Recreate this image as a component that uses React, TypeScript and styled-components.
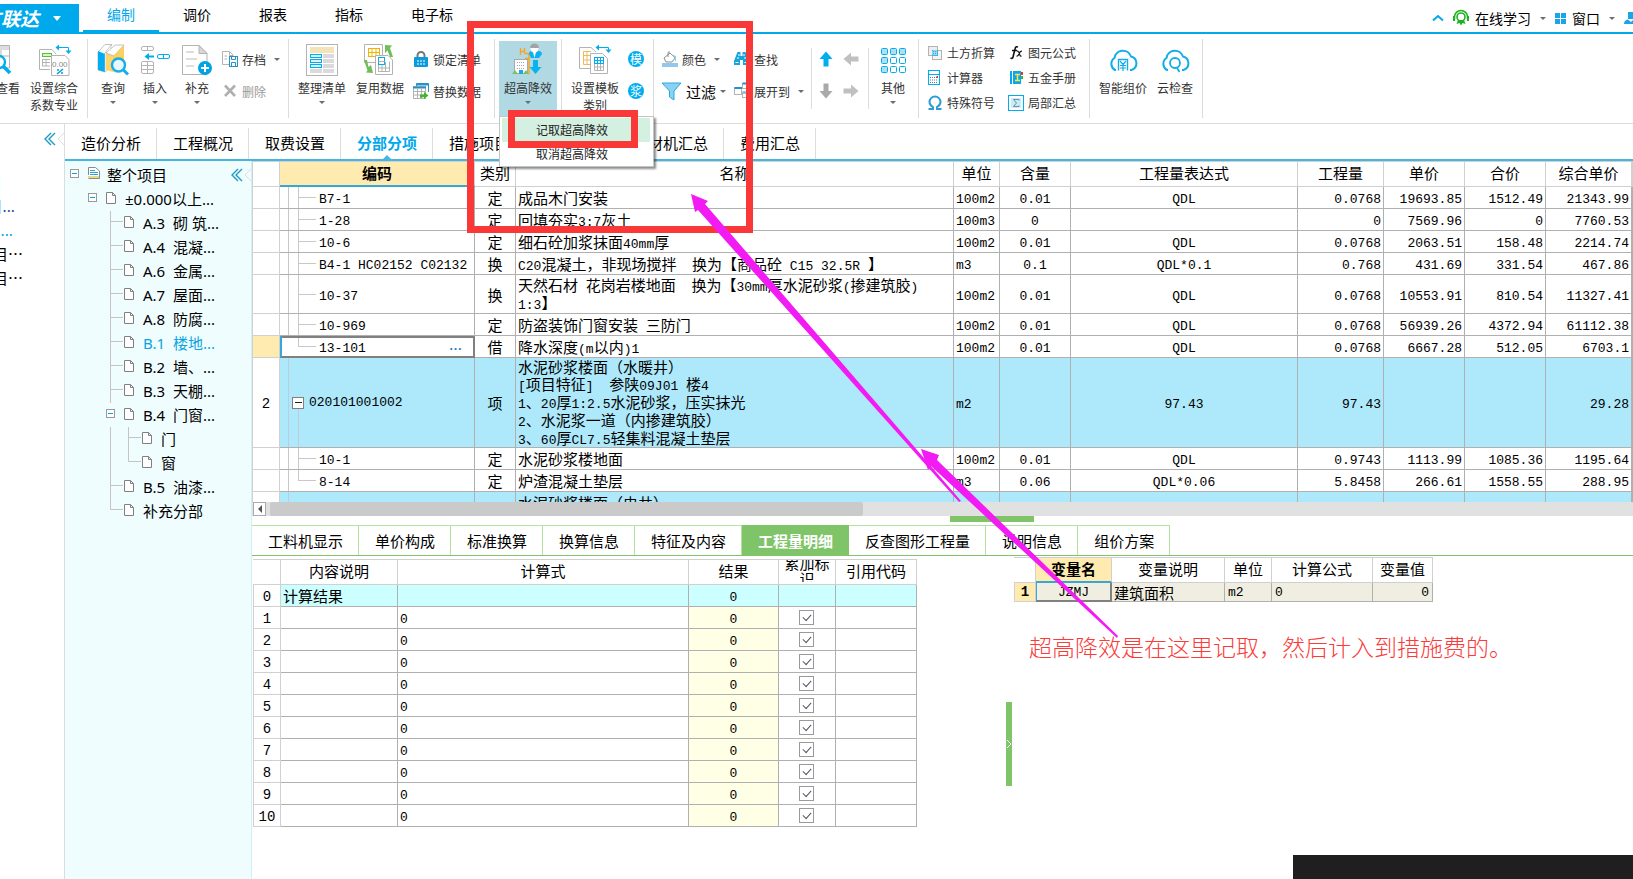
import React from "react";
import styled, { createGlobalStyle, css } from "styled-components";

const UI = `"Noto Sans CJK SC", sans-serif`;
const MONO = `"Liberation Mono", "Noto Sans CJK SC", monospace`;
const BLUE = "#00a8ec";
const LINE = "#dcdcdc";
const GRID = "#b0b0b0";
const GREEN = "#7fc469";

const GlobalStyle = createGlobalStyle`
  * { box-sizing: border-box; }
  body { margin: 0; background: #fff; overflow-x: hidden; }
  button { font: inherit; color: inherit; background: none; border: 0; margin: 0; padding: 0; cursor: pointer; }
  svg { display: block; overflow: visible; flex: none; }
`;

const Page = styled.div`
  position: relative;
  display: flex;
  flex-direction: column;
  min-height: 100vh;
  overflow: hidden;
  font-family: ${UI};
  font-size: 12px;
  color: #000;
  background: #fff;
`;

/* ---------- title bar ---------- */

const TitleBar = styled.header`
  display: flex;
  height: 34px;
  border-bottom: 2px solid ${BLUE};
`;

const Brand = styled.button`
  display: flex;
  align-items: center;
  justify-content: flex-end;
  gap: 14px;
  width: 79px;
  margin: 4px 4px 0 0;
  padding-right: 18px;
  overflow: hidden;
  background: ${BLUE};
  color: #fff;
  font-size: 19px;
  font-weight: 700;
  font-style: italic;
  line-height: 26px;
  white-space: nowrap;
`;

const MenuTab = styled.button<{ $active?: boolean }>`
  padding: 0 24px 2px;
  font-size: 14px;
  line-height: 28px;
  height: 32px;
  color: ${(p) => (p.$active ? BLUE : "#000")};
  border-bottom: 2px solid ${(p) => (p.$active ? BLUE : "transparent")};
`;

const TitleTools = styled.div`
  display: flex;
  align-items: center;
  margin-left: auto;
  padding-top: 4px;
  font-size: 14px;
  white-space: nowrap;
`;

const TitleTool = styled.button`
  display: flex;
  align-items: center;
  gap: 6px;
  margin-left: 9px;
  line-height: 20px;
`;

const Caret = styled.span<{ $gap?: number; $light?: boolean }>`
  flex: none;
  width: 0;
  margin-left: ${(p) => p.$gap ?? 0}px;
  border: solid transparent;
  border-width: 3px 3px 0;
  border-top-color: #6b6b7b;
  ${(p) => p.$light && css`border-width: 5px 4px 0; border-top-color: #fff;`}
`;

/* ---------- ribbon ---------- */

const Ribbon = styled.div`
  display: flex;
  height: 90px;
  border-bottom: 1px solid ${LINE};
  color: #333;
`;

const Group = styled.div<{ $w: number; $pad?: number }>`
  flex: none;
  display: flex;
  width: ${(p) => p.$w - 1}px;
  padding-left: ${(p) => p.$pad ?? 4}px;
`;

const ClippedGroup = styled(Group)`
  justify-content: flex-end;
  padding: 0 9px 0 0;
`;

const Divider = styled.span<{ $short?: boolean }>`
  flex: none;
  width: 1px;
  height: ${(p) => (p.$short ? 61 : 79)}px;
  margin-top: ${(p) => (p.$short ? 14 : 5)}px;
  background: ${LINE};
`;

const BigButton = styled.button<{ $w: number; $on?: boolean }>`
  flex: none;
  display: flex;
  flex-direction: column;
  align-items: center;
  width: ${(p) => p.$w}px;
  height: 75px;
  margin-top: 7px;
  padding-top: 3px;
  white-space: nowrap;
  line-height: 17px;
  background: ${(p) => (p.$on ? "#b1d9e4" : "none")};
`;

const BigLabel = styled.span`
  margin: 3px 0 5px;
`;

const Stack = styled.div<{ $w?: number; $dense?: boolean }>`
  flex: none;
  display: flex;
  flex-direction: column;
  width: ${(p) => (p.$w ? p.$w + "px" : "auto")};
  margin-top: ${(p) => (p.$dense ? 6 : 9)}px;
  padding-left: 4px;
`;

const SmallButton = styled.button<{ $dense?: boolean; $muted?: boolean }>`
  display: flex;
  align-items: center;
  gap: 4px;
  height: ${(p) => (p.$dense ? 25 : 32)}px;
  white-space: nowrap;
  color: ${(p) => (p.$muted ? "#999" : "#333")};
`;

const FilterLabel = styled.span`
  padding-left: 4px;
  font-size: 15px;
  color: #000;
`;

const RoundGlyph = styled.span`
  width: 16px;
  height: 16px;
  border-radius: 8px;
  background: #00aeef;
  color: #fff;
  font-size: 12px;
  line-height: 16px;
  text-align: center;
`;

/* ---------- body layout ---------- */

const Body = styled.div`
  flex: 1;
  display: flex;
`;

const ProjectRail = styled.aside`
  flex: none;
  width: 65px;
  border-right: 1px solid ${LINE};
`;

const RailHead = styled.div`
  display: flex;
  align-items: flex-start;
  justify-content: flex-end;
  height: 46px;
  padding-top: 7px;
`;

const RailItem = styled.div<{ $w: number; $color: string }>`
  display: flex;
  justify-content: flex-end;
  width: ${(p) => p.$w}px;
  height: 24px;
  overflow: hidden;
  font-size: 15px;
  line-height: 24px;
  white-space: nowrap;
  color: ${(p) => p.$color};
`;

const Workspace = styled.main`
  flex: 1;
  min-width: 0;
  display: flex;
  flex-direction: column;
`;

const SectionTabs = styled.nav`
  display: flex;
  height: 37px;
  padding-top: 4px;
  border-bottom: 2px solid #45b5e1;
`;

const SectionTab = styled.button<{ $active?: boolean }>`
  display: flex;
  flex-direction: column;
  align-items: center;
  justify-content: space-between;
  padding: 4px 15px 0 16px;
  border-right: 1px solid ${LINE};
  font-size: 15px;
  line-height: 22px;
  white-space: nowrap;
  color: ${(p) => (p.$active ? BLUE : "#000")};
  font-weight: ${(p) => (p.$active ? 700 : 400)};
  &::after {
    content: "";
    border: solid transparent;
    border-width: 0 4px 4px;
    border-bottom-color: ${(p) => (p.$active ? "#45b5e1" : "transparent")};
  }
`;

const Panels = styled.div`
  flex: 1;
  display: flex;
  min-width: 0;
`;

const TreePanel = styled.aside`
  flex: none;
  width: 187px;
  padding: 2px 0 0 1px;
  background: #f0fdff;
  border-right: 1px solid #d5eef3;
`;

const TreeRow = styled.div`
  display: flex;
  height: 24px;
`;

const TreeLabel = styled.button<{ $active?: boolean }>`
  padding: 0 0 0 5px;
  font-family: "Noto Sans", ${UI};
  font-size: 15px;
  line-height: 24px;
  height: 24px;
  white-space: pre;
  color: ${(p) => (p.$active ? "#0aa5dd" : "#000")};
`;

const TreeCollapse = styled.button`
  margin: 4px 0 0 auto;
  align-self: flex-start;
`;

const Content = styled.section`
  flex: 1;
  min-width: 0;
  display: flex;
  flex-direction: column;
`;

/* ---------- estimate table ---------- */

const GridPane = styled.div`
  height: 341px;
  overflow: hidden;
`;

const Table = styled.table`
  width: 100%;
  table-layout: fixed;
  border-collapse: separate;
  border-spacing: 0;
  font-family: ${MONO};
  font-size: 13px;
  line-height: 17px;
  color: #000;
`;

const Th = styled.th<{ $hot?: boolean }>`
  height: 26px;
  padding: 0 0 2px;
  border: 0 solid #d0d0d0;
  border-width: 1px 1px 1px 0;
  font-family: ${UI};
  font-size: 15px;
  line-height: 16px;
  font-weight: 400;
  white-space: nowrap;
  ${(p) =>
    p.$hot &&
    css`
      font-weight: 700;
      background: #ffebb0;
      border-bottom: 2px solid #38a6d6;
    `}
`;

const Tr = styled.tr<{ $h: number; $bg?: string }>`
  height: ${(p) => p.$h}px;
  background: ${(p) => p.$bg ?? "#fff"};
`;

const Td = styled.td<{ $align?: string; $bg?: string }>`
  padding: 4px 2px 0;
  border: 0 solid ${GRID};
  border-width: 0 1px 1px 0;
  text-align: ${(p) => p.$align ?? "left"};
  white-space: pre-wrap;
  overflow: hidden;
  background: ${(p) => p.$bg ?? "transparent"};
`;

const NumTd = styled(Td)<{ $hot?: boolean }>`
  padding: 4px 0 0;
  border-color: #d0d0d0;
  border-left: 1px solid #d0d0d0;
  text-align: center;
  font-size: 14px;
  background: ${(p) => (p.$hot ? "#ffebb0" : "#fff")};
  font-weight: ${(p) => (p.$hot ? 700 : 400)};
`;

const CornerTh = styled(Th)`
  border-left: 1px solid #d0d0d0;
`;

const CjkTd = styled(Td)<{ $top?: boolean }>`
  font-family: ${UI};
  font-size: 15px;
  padding: ${(p) => (p.$top ? "2px 0 0 2px" : "0 0 0 2px")};
  ${(p) => p.$align === "center" && css`padding: 0;`}
  vertical-align: ${(p) => (p.$top ? "top" : "middle")};
`;

const Latin = styled.span`
  font-family: ${MONO};
  font-size: 13px;
  line-height: 1;
`;

const CodeTd = styled(Td)<{ $last?: boolean; $active?: boolean }>`
  padding-left: 39px;
  white-space: nowrap;
  background-image: linear-gradient(#c8c8c8, #c8c8c8), linear-gradient(#c8c8c8, #c8c8c8), linear-gradient(#c8c8c8, #c8c8c8);
  background-repeat: no-repeat;
  background-position: 8px 0, 18px 0, 18px 50%;
  background-size: ${(p) => (p.$active ? "0 0" : "1px 100%")}, 1px ${(p) => (p.$last ? "50%" : "100%")}, 18px 1px;
  ${(p) =>
    p.$active &&
    css`
      box-shadow: inset 2px 0 #38a6d6, inset 0 2px #808080, inset 0 -1px #808080, inset -1px 0 #808080;
      border-color: #808080;
    `}
`;

const CodeLine = styled.div`
  display: flex;
  justify-content: space-between;
  padding-right: 10px;
`;

const MoreButton = styled.button`
  color: #2a80c8;
  font-family: ${UI};
  font-weight: 700;
  line-height: 12px;
`;

const GroupCodeTd = styled(Td)<{ $open?: boolean }>`
  padding: 0;
  background-image: linear-gradient(#bcd, #bcd), linear-gradient(#bcd, #bcd);
  background-repeat: no-repeat;
  background-position: 8px 0, 18px 100%;
  background-size: 1px 100%, 1px ${(p) => (p.$open ? "50%" : "0")};
`;

const GroupCode = styled.div`
  display: flex;
  align-items: center;
  gap: 5px;
  padding-left: 12px;
`;

const ExpandBox = styled.button`
  flex: none;
  display: grid;
  place-items: center;
  width: 12px;
  height: 12px;
  border: 1px solid #808080;
  background: #fff;
  &::before {
    content: "";
    width: 7px;
    height: 1px;
    background: #222;
  }
`;

const GridScroll = styled.div`
  display: flex;
  height: 14px;
  padding-left: 1px;
  background: #e1e1e1;
`;

const ScrollArrow = styled.button`
  display: grid;
  place-items: center;
  width: 13px;
  border: 1px solid #ababab;
  background: #fff;
`;

const ScrollThumb = styled.div`
  width: 43%;
  margin-left: 4px;
  background: #cacaca;
  border-radius: 2px;
`;

const PaneHandle = styled.div`
  width: 84px;
  height: 6px;
  margin: 0 0 3px 698px;
  background: ${GREEN};
`;

/* ---------- detail panes ---------- */

const DetailTabs = styled.nav`
  display: flex;
  height: 31px;
  border-bottom: 1px solid ${GREEN};
`;

const DetailTab = styled.button<{ $active?: boolean }>`
  padding: 0 15px 0 16px;
  border: solid #b4e29f;
  border-width: 1px 1px 0 0;
  font-size: 15px;
  line-height: 27px;
  white-space: nowrap;
  ${(p) =>
    p.$active &&
    css`
      background: ${GREEN};
      border-color: ${GREEN};
      color: #fff;
      font-weight: 700;
    `}
`;

const DetailPanes = styled.div`
  flex: 1;
  display: flex;
`;

const FormulaPane = styled.div`
  width: 754px;
  padding: 3px 0 0 1px;
`;

const VariablePane = styled.div`
  flex: 1;
  padding: 1px 0 0 2px;
`;

const SizedTable = styled(Table)<{ $w: number }>`
  width: ${(p) => p.$w}px;
`;

const WrapHead = styled.div`
  display: flex;
  flex-direction: column;
  justify-content: center;
  align-items: center;
  height: 22px;
  padding: 0 4px;
  overflow: hidden;
  white-space: normal;
  line-height: 16px;
`;

const Splitter = styled.button`
  flex: none;
  display: grid;
  place-items: center;
  width: 6px;
  height: 84px;
  margin-top: 146px;
  background: ${GREEN};
`;

const Tick = styled.input`
  appearance: none;
  display: inline-grid;
  place-items: center;
  width: 15px;
  height: 15px;
  margin: 0 1px 0 0;
  border: 1px solid #9a9a9a;
  background: #fff;
  vertical-align: middle;
  &:checked::before {
    content: "";
    width: 7px;
    height: 4px;
    border: solid #555566;
    border-width: 0 0 1px 1px;
    transform: translateY(-1px) rotate(-48deg);
  }
`;

const TickTd = styled(Td)`
  padding: 0;
  text-align: center;
  line-height: 15px;
`;

const VarTd = styled(Td)<{ $active?: boolean }>`
  padding: 1px 3px 0;
  ${(p) =>
    p.$active &&
    css`
      box-shadow: inset 1px 0 #38a6d6, inset 0 -1px #808080, inset -1px 0 #808080;
      border-color: #808080;
    `}
`;

const VarNumTd = styled(NumTd)`
  padding: 0;
`;

/* ---------- things lying over the page ---------- */

const Menu = styled.div`
  position: absolute;
  left: 499px;
  top: 116px;
  width: 155px;
  height: 51px;
  padding: 1px 3px 1px 2px;
  border: 1px solid #c4c4c4;
  background: #fff;
  box-shadow: 2px 2px 2px rgba(0, 0, 0, 0.45);
`;

const MenuItem = styled.button<{ $hover?: boolean }>`
  display: block;
  width: 100%;
  height: 24px;
  padding-left: 34px;
  text-align: left;
  line-height: 24px;
  color: #222;
  background: ${(p) => (p.$hover ? "#d3f0e0" : "#fff")};
`;

const RedFrame = styled.div<{ $x: number; $y: number; $w: number; $h: number }>`
  position: absolute;
  left: ${(p) => p.$x}px;
  top: ${(p) => p.$y}px;
  width: ${(p) => p.$w}px;
  height: ${(p) => p.$h}px;
  border: 7px solid #fb3838;
  pointer-events: none;
`;

const Arrows = styled.svg`
  position: absolute;
  left: 0;
  top: 0;
  pointer-events: none;
`;

const Remark = styled.p`
  position: absolute;
  left: 1029px;
  top: 629px;
  margin: 0;
  font-size: 23px;
  font-weight: 300;
  line-height: 34px;
  color: #fb3a3a;
  white-space: nowrap;
`;

const CornerBlock = styled.div`
  position: absolute;
  right: 0;
  bottom: 0;
  width: 340px;
  height: 24px;
  background: #1f1f1f;
`;

/* ---------- icons ---------- */

const G = "#b3b3b3";
const B = "#00aeef";

const Big = ({ children }: { children: React.ReactNode }) => (
  <svg width="32" height="32" viewBox="0 0 32 32" fill="none" aria-hidden="true">
    {children}
  </svg>
);
const Small = ({ children }: { children: React.ReactNode }) => (
  <svg width="16" height="16" viewBox="0 0 16 16" fill="none" aria-hidden="true">
    {children}
  </svg>
);

const ViewIcon = () => (
  <Big>
    <path d="M0 1.5H17.5V24H0" stroke={G} />
    <path d="M0 2H17V6H0Z" fill="#ddd" />
    <path d="M0 12H17M9 6V12" stroke={G} />
    <circle cx="7" cy="18" r="6" stroke={B} strokeWidth="2.4" fill="#fff" />
    <path d="M11 22L18 29" stroke={B} strokeWidth="3.6" />
  </Big>
);
const FactorIcon = () => (
  <Big>
    <path d="M12 25.5H1.5V5.5H14L18 10" stroke={G} />
    <rect x="4.500" y="9.500" width="9" height="3" fill="#d7f5c8" stroke="#58c22d" />
    <path d="M4.500 15V22M8 15V22M4 15.500H12M4 18.500H12M4 22H12" stroke={G} />
    <path d="M13.500 11.500H27L31 15.500V31.500H13.500Z" fill="#fff" stroke={G} />
    <text x="14" y="23" fontSize="8" fill="#888" fontFamily="Liberation Sans">0.00</text>
    <path d="M19 30L25 25M19 26h2M23 29h2" stroke="#009fe0" strokeWidth="1.600" />
    <path d="M19 3.500H30.500V8" stroke={B} />
    <path d="M21 .5L17.500 3.500L21 6.500ZM27.500 6.500L30.500 10L33.500 6.500Z" fill={B} />
  </Big>
);
const QueryIcon = () => (
  <Big>
    <path d="M1 8L8 0.500H15L8 9V28L1 26Z" fill="#fff" stroke="#999" strokeWidth=".6" />
    <path d="M1 7L8 10V28L1 26Z" fill={B} />
    <path d="M8 9L14 1V24L8 28Z" fill="#fff" stroke="#bbb" strokeWidth=".6" />
    <path d="M9 9L16 12V28L9 26Z" fill="#fdd36a" />
    <path d="M9 9L18 1H27L17 12Z" fill="#fff" stroke="#999" strokeWidth=".6" />
    <path d="M16 12L27 1V22L16 28Z" fill="#fbd063" />
    <circle cx="21.500" cy="21" r="6.500" fill="#e8f7fd" stroke="#17aee8" strokeWidth="2.400" />
    <path d="M26 25.500L31 30.500" stroke="#17aee8" strokeWidth="3" />
  </Big>
);
const InsertIcon = () => (
  <Big>
    <rect x="2.500" y="2.500" width="12" height="4" rx="1.500" stroke={G} />
    <path d="M8.500 2.500v4" stroke={G} />
    <path d="M15 12.500H8" stroke={B} strokeWidth="2" />
    <path d="M10 9L5.500 12.500L10 16Z" fill={B} />
    <rect x="18.500" y="10.500" width="12" height="4" rx="1.500" stroke={B} />
    <path d="M24.500 10.500v4" stroke={B} />
    <rect x="2.500" y="17.500" width="12" height="12" rx="1.500" stroke={G} />
    <path d="M8.500 17.500v12M2.500 21.500h12M2.500 25.500h12" stroke={G} />
  </Big>
);
const SupplyIcon = () => (
  <Big>
    <path d="M1.500 1.500H18L26 9.500V30.500H1.500Z" fill="#fff" stroke={G} />
    <path d="M18 1.500V9.500H26Z" fill="#d8d8d8" stroke={G} />
    <path d="M5 8H13M5 15H16M5 22H13" stroke="#ddd" strokeWidth="2" />
    <circle cx="24" cy="24" r="7" fill="#00a4e4" />
    <path d="M24 20V28M20 24H28" stroke="#fff" strokeWidth="2" />
  </Big>
);
const ArchiveIcon = () => (
  <Small>
    <path d="M7 13.500H.5V.5H7.500L11 4V6" stroke={G} />
    <path d="M7.500 .5V4.500H11M2.500 5H5M2.500 8H5" stroke={G} />
    <rect x="7.500" y="5.500" width="8" height="10" fill="#fff" stroke="#2493c6" />
    <path d="M9.500 5.500v3h4v-3M9.500 15.500v-4h4v4" stroke="#2493c6" />
  </Small>
);
const DeleteIcon = () => (
  <Small>
    <path d="M3 2.500L13 13M13 2.500L3 13" stroke="#b0b0b0" strokeWidth="2.600" />
  </Small>
);
const TidyIcon = () => (
  <Big>
    <rect x=".5" y=".5" width="31" height="31" stroke={G} />
    <rect x="4" y="3" width="24" height="6" fill="#f2e4b8" />
    {[10, 15, 20].map((y) => (
      <g key={y}>
        <rect x="4.500" y={y + 0.5} width="11" height="3" fill="#d9f2fc" stroke={B} />
        <rect x="17" y={y} width="11" height="4" fill="#d9d9de" />
      </g>
    ))}
    <rect x="4" y="25" width="12" height="4" fill="#d9d9de" />
    <rect x="17" y="25" width="11" height="4" fill="#d9d9de" />
  </Big>
);
const ReuseIcon = () => (
  <Big>
    <path d="M11 18.500H.5V.5H18.500V11" stroke={G} />
    <rect x="4.500" y="4.500" width="11" height="8" stroke="#f0b400" />
    <path d="M8 4.500v8M12 4.500v8M4.500 8.500h11" stroke="#f0b400" />
    <path d="M11.500 11.500H24L28.500 16V30.500H11.500Z" fill="#fff" stroke={G} />
    <rect x="14.500" y="13.500" width="6" height="7" stroke={B} />
    <path d="M14.500 17.500h6M14.500 27.500h11v-10M18 21v6.500M21.500 18v9.500M14.500 24h11M14.500 21v6.500" stroke={G} />
    <path d="M21 1L28 1.500L26 4L29 13H26L23.500 6.500L21 9Z" fill="#6fbe57" />
    <path d="M0 16H3L4.500 23L7 21L9 29L2 28.500L3.500 26.500Z" fill="#6fbe57" />
  </Big>
);
const LockIcon = () => (
  <Small>
    <path d="M4.500 7V4.500A3.500 3.500 0 0 1 11.500 4.500V7" stroke="#777" strokeWidth="2" />
    <rect x="1" y="6" width="14" height="10" rx="1" fill="#0a9bdc" />
    <path d="M4 10h2M7 10h2M10 10h2M4 13h2M7 13h2M10 13h2" stroke="#fff" />
  </Small>
);
const ReplaceIcon = () => (
  <Small>
    <path d="M3.500 3V.5H15.500V9" stroke="#2493c6" />
    <path d="M3.500 1.500H15.500" stroke="#2493c6" strokeWidth="2" />
    <rect x=".5" y="3.500" width="12" height="12" fill="#fff" stroke={G} />
    <path d="M0 4.500H13" stroke="#2493c6" strokeWidth="2" />
    <path d="M.5 8.500h12M.5 12h12M4.500 5v10M8.500 5v10" stroke={G} />
    <path d="M7 15V11.500H11V9L15.500 12.500L11 16V14Z" fill="#45b52d" />
  </Small>
);
const HighRiseIcon = () => (
  <Big>
    <path d="M8.500 4V11M12.500 4V9M8 7.500H12M12.500 9.500H17V30M13 14.500H17" stroke="#f5a623" strokeWidth="1.400" />
    <rect x="2.500" y="15.500" width="13" height="14" fill="#fff" stroke="#aaa" />
    <path d="M5 18.500h8M5 21.500h8M5 24.500h8" stroke="#aaa" strokeDasharray="1 1" />
    <rect x="7" y="26" width="4" height="4" fill="#22a7d8" />
    <path d="M0 30L3 26L6 30ZM11 30L14 26L17 30Z" fill="#7cc162" />
    <path d="M17 10Q17 6 22 6.500Q30 6 30 10L27 14H19Z" fill="#0ab2ef" />
    <path d="M21 8L22.500 14L24 8Z" fill="#fff" />
    <circle cx="22.500" cy="4.500" r="4" fill="#fff" />
    <path d="M18 4A4.500 4.500 0 0 1 27 4Z" fill="#a3a3a3" />
    <path d="M21 16H26V23H29.500L23.500 30L17.500 23H21Z" fill="#0ab2ef" />
  </Big>
);
const TemplateIcon = () => (
  <Big>
    <path d="M11 24.500H.5V3.500H12L17 8" stroke={G} />
    <path d="M12 20.500H4.500V7.500H12" stroke="#f0b95a" />
    <path d="M4.500 11.500H11M4.500 16H11M8 7.500v13" stroke="#f0b95a" />
    <path d="M11.500 9.500H23.500L28.500 14.500V29.500H11.500Z" fill="#fff" stroke={G} />
    <rect x="15.500" y="13.500" width="9" height="6" stroke={B} />
    <path d="M15.500 16.500h9M18.500 13.500v6M21.500 13.500v6" stroke={B} />
    <path d="M15.500 20v6.500h9V20M15.500 23h9M18.500 20v6M21.500 20v6" stroke={G} />
    <path d="M18 3.500H29.500V7" stroke={B} />
    <path d="M20 .5L16.500 3.500L20 6.500ZM26.500 5.500L29.500 9L32.500 5.500Z" fill={B} />
  </Big>
);
const PaintIcon = () => (
  <Small>
    <path d="M2 7L8 2L13 7L10 11H4Z" fill="#fff" stroke="#8b8b8b" />
    <path d="M6 6V2Q6 .5 8 1" stroke="#8b8b8b" />
    <path d="M9 3L14 5V11Q12 9 13 7Z" fill="#8fd7dd" />
    <rect x="0" y="12" width="16" height="4" fill="#92c7ee" />
  </Small>
);
const FilterIcon = () => (
  <Small>
    <path d="M0 0H19L12 8V17L7.500 14V8Z" fill="#8ad2f2" stroke="#2aa9e0" />
  </Small>
);
const FindIcon = () => (
  <Small>
    <path d="M3.500 1H6.500V5H8.500V1H11.500L15 10V14H9V9H6V14H0V10Z" fill="#18a5dc" />
    <path d="M1.500 11.500h3M10.500 11.500h3M4 4h2M9 4h2M3 7h2M10 7h2" stroke="#fff" />
  </Small>
);
const ExpandIcon = () => (
  <Small>
    <rect x=".5" y="4.500" width="7" height="7" stroke={G} />
    <path d="M.5 5H8" stroke="#2493c6" strokeWidth="2" />
    <rect x="8.500" y=".5" width="6" height="5" stroke={G} />
    <path d="M8.500 .5h6M8.500 9.500h6" stroke="#2493c6" strokeWidth="2" />
    <rect x="8.500" y="9.500" width="6" height="5" stroke={G} />
  </Small>
);
const Arrow = ({ turn, color }: { turn: number; color: string }) => (
  <Small>
    <path d="M8 0.500L14.500 8H10.500V15.500H5.500V8H1.500Z" fill={color} transform={`rotate(${turn} 8 8)`} />
  </Small>
);
const OtherIcon = () => (
  <Big>
    {[0, 1, 2].map((r) =>
      [0, 1, 2].map((c) => (
        <rect key={`${r}${c}`} x={4.5 + c * 9} y={4.5 + r * 9} width="6" height="6" rx="1" stroke={B} fill={r === 0 || c === 0 ? "#aee0f5" : "#fff"} />
      ))
    )}
  </Big>
);
const EarthIcon = () => (
  <Small>
    <rect x="1.500" y="1.500" width="9" height="9" fill="#eee" stroke={G} />
    <rect x="5.500" y="5.500" width="9" height="9" fill="#f4f4f4" stroke={G} />
    <rect x="5" y="5" width="6" height="6" fill="#3ab4e4" />
    <path d="M5 7h6M5 9h6M7 5v6M9 5v6" stroke="#d8f0fa" strokeDasharray="1 1" />
  </Small>
);
const CalcIcon = () => (
  <Small>
    <rect x="1.500" y=".5" width="11" height="14" stroke={B} fill="#fff" />
    <path d="M1.500 4.500h11" stroke={B} />
    <path d="M3 7.500h8M3 10h8M3 12.500h8" stroke="#4a7d9a" strokeDasharray="1 1" />
    <path d="M9.500 7h1.500" stroke="#e33" strokeWidth="2" />
  </Small>
);
const OmegaIcon = () => (
  <Small>
    <path d="M1.500 14H6V12Q2.500 10 2.500 7A5.500 5.500 0 0 1 13.500 7Q13.500 10 10 12V14H14.500" stroke="#2f9cd6" strokeWidth="2" />
  </Small>
);
const FxIcon = () => (
  <Small>
    <path d="M10 2Q7.500 1 7 4L5 12Q4.500 14 2.500 13M4 5.500H9" stroke="#111" strokeWidth="1.600" />
    <path d="M9 6Q11 6 11.500 9Q12 11.500 13.500 11M14 6Q12 6 11 9Q10 11.500 8.500 11" stroke="#111" strokeWidth="1.200" />
  </Small>
);
const BookIcon = () => (
  <Small>
    <rect x="2" y="1" width="11" height="13" fill="#0ba7e6" />
    <path d="M4.500 1V14" stroke="#fff" />
    <path d="M7 4.500h5M7 10.500h5M9.500 4.500v6" stroke="#ffe14d" strokeWidth="1.500" />
    <path d="M14 2v3" stroke="#e33" strokeWidth="2" />
    <path d="M14 6v3" stroke="#3b3" strokeWidth="2" />
  </Small>
);
const SumIcon = () => (
  <Small>
    <rect x=".5" y=".5" width="15" height="15" stroke={B} fill="#fff" />
    <rect x="3" y="3" width="10" height="10" fill="#c3eefb" />
    <path d="M11 5.500V4.500H5.500L8.500 8L5.500 11.500H11V10.500" stroke="#808890" />
  </Small>
);
const cloud = "M9 26H8A7 7 0 0 1 7.500 14A8.500 8.500 0 0 1 24 12.500A7 7 0 0 1 24.500 26H23";
const CloudPriceIcon = () => (
  <Big>
    <path d={cloud} stroke="#13ade9" strokeWidth="2" />
    <path d="M11.500 26.500V15.500H20.500V26.500" stroke="#13ade9" strokeWidth="1.400" />
    <path d="M13 17L16 20.500L19 17M16 20.500V27M13 21.500H19M13 24H19" stroke="#13ade9" strokeWidth="1.200" />
  </Big>
);
const CloudCheckIcon = () => (
  <Big>
    <path d={cloud} stroke="#13ade9" strokeWidth="2" />
    <circle cx="16" cy="19" r="5" stroke="#13ade9" strokeWidth="1.800" fill="#fff" />
    <path d="M18 24L20.500 28" stroke="#13ade9" strokeWidth="1.800" />
  </Big>
);
const Chevrons = () => (
  <svg width="20" height="16" viewBox="0 0 20 16" fill="none" aria-hidden="true">
    <path d="M7 2L1 8L7 14M11 2L5 8L11 14" stroke="#1a9cc4" strokeWidth="1.400" />
    <path d="M20 2L14 8L20 14" stroke="#ddd" />
  </svg>
);

/* ---------- small helpers ---------- */

const Mixed = ({ text }: { text: string }) => (
  <>
    {text.split(/([\x20-\x7e]+)/).map((s, i) => (i % 2 ? <Latin key={i}>{s}</Latin> : s))}
  </>
);

const Cell = ({ kind }: { kind: string }) => (
  <svg width="18" height="24" viewBox="0 0 18 24" fill="none" stroke="#c4c4c4" aria-hidden="true">
    {kind === "|" && <path d="M8.500 0V24" />}
    {kind === "t" && <path d="M8.500 0V24M8.500 10.500H21" />}
    {kind === "l" && <path d="M8.500 0V10.500H21" />}
    {kind === "b" && (
      <>
        <rect x="4.500" y="6.500" width="8" height="8" fill="#fff" stroke="#9a9a9a" />
        <path d="M6 10.500h5" stroke="#0aa5dd" />
      </>
    )}
    {kind === "d" && <path d="M4.500 5.500H10.500L13.500 8.500V16.500H4.500ZM10.500 5.500V8.500H13.500" fill="#fff" stroke="#808080" />}
    {kind === "p" && (
      <>
        <path d="M4.500 12V4.500H11.500L15.500 8V15.500H4.500" fill="#fff" stroke="#8a8a8a" />
        <path d="M6 7.500h5M6 9.500h8M6 11.500h8" stroke="#2aa5d0" />
        <path d="M4 14H15" stroke="#e9d98a" strokeWidth="2" />
      </>
    )}
  </svg>
);

/* ---------- data ---------- */

const TREE: [string, string][] = [
  ["bp", "整个项目"],
  [" bd", "±0.000以上..."],
  ["  td", "A.3  砌 筑..."],
  ["  td", "A.4  混凝..."],
  ["  td", "A.6  金属..."],
  ["  td", "A.7  屋面..."],
  ["  td", "A.8  防腐..."],
  ["  td", "B.1  楼地..."],
  ["  td", "B.2  墙、..."],
  ["  td", "B.3  天棚..."],
  ["  bd", "B.4  门窗..."],
  ["  |td", "门"],
  ["  |ld", "窗"],
  ["  td", "B.5  油漆..."],
  ["  ld", "补充分部"],
];

type Row = { code: string; kind: string; name: string; v: string[]; h?: number; no?: string; last?: boolean; active?: boolean };

const ROWS: Row[] = [
  { code: "B7-1", kind: "定", name: "成品木门安装", v: ["100m2", "0.01", "QDL", "0.0768", "19693.85", "1512.49", "21343.99"] },
  { code: "1-28", kind: "定", name: "回填夯实3:7灰土", v: ["100m3", "0", "", "0", "7569.96", "0", "7760.53"] },
  { code: "10-6", kind: "定", name: "细石砼加浆抹面40mm厚", v: ["100m2", "0.01", "QDL", "0.0768", "2063.51", "158.48", "2214.74"] },
  { code: "B4-1 HC02152 C02132", kind: "换", name: "C20混凝土，非现场搅拌  换为【商品砼 C15 32.5R 】", v: ["m3", "0.1", "QDL*0.1", "0.768", "431.69", "331.54", "467.86"] },
  { code: "10-37", kind: "换", name: "天然石材 花岗岩楼地面  换为【30mm厚水泥砂浆(掺建筑胶) 1:3】", h: 39, v: ["100m2", "0.01", "QDL", "0.0768", "10553.91", "810.54", "11327.41"] },
  { code: "10-969", kind: "定", name: "防盗装饰门窗安装 三防门", v: ["100m2", "0.01", "QDL", "0.0768", "56939.26", "4372.94", "61112.38"] },
  { code: "13-101", kind: "借", name: "降水深度(m以内)1", last: true, active: true, v: ["100m2", "0.01", "QDL", "0.0768", "6667.28", "512.05", "6703.1"] },
  { no: "2", code: "020101001002", kind: "项", h: 90, name: "水泥砂浆楼面（水暖井）\n[项目特征]  参陕09J01 楼4\n1、20厚1:2.5水泥砂浆，压实抹光\n2、水泥浆一道（内掺建筑胶）\n3、60厚CL7.5轻集料混凝土垫层", v: ["m2", "", "97.43", "97.43", "", "", "29.28"] },
  { code: "10-1", kind: "定", name: "水泥砂浆楼地面", v: ["100m2", "0.01", "QDL", "0.9743", "1113.99", "1085.36", "1195.64"] },
  { code: "8-14", kind: "定", name: "炉渣混凝土垫层", last: true, v: ["m3", "0.06", "QDL*0.06", "5.8458", "266.61", "1558.55", "288.95"] },
];

const ALIGN = ["left", "center", "center", "right", "right", "right", "right"];
const HEADS = ["单位", "含量", "工程量表达式", "工程量", "单价", "合价", "综合单价"];
const COLS = [28, 195, 41, 0, 46, 71, 227, 86, 81, 81, 86, 1];

const Cols = ({ widths }: { widths: number[] }) => (
  <colgroup>
    {widths.map((w, i) => (
      <col key={i} width={w || undefined} />
    ))}
  </colgroup>
);

export default function App() {
  return (
    <>
      <GlobalStyle />
      <Page>
        <TitleBar>
          <Brand>
            <span>广联达</span>
            <Caret $light />
          </Brand>
          {["编制", "调价", "报表", "指标", "电子标"].map((t, i) => (
            <MenuTab key={t} $active={i === 0}>{t}</MenuTab>
          ))}
          <TitleTools>
            <TitleTool aria-label="收起">
              <svg width="12" height="8" viewBox="0 0 12 8" fill="none"><path d="M1 6.500L6 2L11 6.500" stroke={BLUE} strokeWidth="2" /></svg>
            </TitleTool>
            <TitleTool>
              <svg width="16" height="16" viewBox="0 0 16 16" fill="none">
                <path d="M1.500 9V7A6.500 6.500 0 0 1 14.500 7V9" stroke="#1fb21f" strokeWidth="1.600" />
                <circle cx="8" cy="7" r="4" stroke="#1fb21f" strokeWidth="1.600" />
                <path d="M1 6v5M15 6v5" stroke="#1fb21f" strokeWidth="2" />
                <path d="M5 10L3.500 14L6.500 13L8 15.500L9.500 13L12.500 14L11 10" fill="#1fb21f" />
              </svg>
              <span>在线学习</span>
              <Caret $gap={3} />
            </TitleTool>
            <TitleTool>
              <svg width="11" height="11" viewBox="0 0 11 11" fill="#19a5e8"><path d="M0 0h5v5H0zM6 0h5v5H6zM0 6h5v5H0zM6 6h5v5H6z" /></svg>
              <span>窗口</span>
              <Caret $gap={3} />
            </TitleTool>
            <TitleTool aria-label="用户">
              <svg width="9" height="12" viewBox="0 0 9 12" fill="#19a5e8"><path d="M4 0H9V7H4ZM0 12Q0 8 4 7.500L7 10L9 8V12Z" /></svg>
            </TitleTool>
          </TitleTools>
        </TitleBar>

        <Ribbon>
          <ClippedGroup $w={88}>
            <BigButton $w={44}><ViewIcon /><BigLabel>查看</BigLabel></BigButton>
            <BigButton $w={48}><FactorIcon /><BigLabel>设置综合<br />系数专业</BigLabel></BigButton>
          </ClippedGroup>
          <Divider />
          <Group $w={201}>
            <BigButton $w={42}><QueryIcon /><BigLabel>查询</BigLabel><Caret /></BigButton>
            <BigButton $w={42}><InsertIcon /><BigLabel>插入</BigLabel><Caret /></BigButton>
            <BigButton $w={42}><SupplyIcon /><BigLabel>补充</BigLabel><Caret /></BigButton>
            <Stack>
              <SmallButton><ArchiveIcon />存档<Caret $gap={4} /></SmallButton>
              <SmallButton $muted><DeleteIcon />删除</SmallButton>
            </Stack>
          </Group>
          <Divider />
          <Group $w={206}>
            <BigButton $w={58}><TidyIcon /><BigLabel>整理清单</BigLabel><Caret /></BigButton>
            <BigButton $w={58}><ReuseIcon /><BigLabel>复用数据</BigLabel></BigButton>
            <Stack>
              <SmallButton><LockIcon />锁定清单</SmallButton>
              <SmallButton><ReplaceIcon />替换数据</SmallButton>
            </Stack>
          </Group>
          <Divider />
          <Group $w={67}>
            <BigButton $w={58} $on><HighRiseIcon /><BigLabel>超高降效</BigLabel><Caret /></BigButton>
          </Group>
          <Divider />
          <Group $w={92}>
            <BigButton $w={58}><TemplateIcon /><BigLabel>设置模板<br />类别</BigLabel></BigButton>
            <Stack>
              <SmallButton><RoundGlyph>模</RoundGlyph></SmallButton>
              <SmallButton><RoundGlyph>浆</RoundGlyph></SmallButton>
            </Stack>
          </Group>
          <Divider />
          <Group $w={158}>
            <Stack $w={72}>
              <SmallButton><PaintIcon />颜色<Caret $gap={4} /></SmallButton>
              <SmallButton><FilterIcon /><FilterLabel>过滤</FilterLabel><Caret /></SmallButton>
            </Stack>
            <Stack>
              <SmallButton><FindIcon />查找</SmallButton>
              <SmallButton><ExpandIcon />展开到<Caret $gap={4} /></SmallButton>
            </Stack>
          </Group>
          <Divider $short />
          <Group $w={57} $pad={2}>
            <Stack $w={25}>
              <SmallButton aria-label="上移"><Arrow turn={0} color={B} /></SmallButton>
              <SmallButton aria-label="下移"><Arrow turn={180} color="#a9a9a9" /></SmallButton>
            </Stack>
            <Stack>
              <SmallButton aria-label="升级"><Arrow turn={270} color="#c0c0c0" /></SmallButton>
              <SmallButton aria-label="降级"><Arrow turn={90} color="#c0c0c0" /></SmallButton>
            </Stack>
          </Group>
          <Divider $short />
          <Group $w={50} $pad={3}>
            <BigButton $w={42}><OtherIcon /><BigLabel>其他</BigLabel><Caret /></BigButton>
          </Group>
          <Divider />
          <Group $w={171}>
            <Stack $w={81} $dense>
              <SmallButton $dense><EarthIcon />土方折算</SmallButton>
              <SmallButton $dense><CalcIcon />计算器</SmallButton>
              <SmallButton $dense><OmegaIcon />特殊符号</SmallButton>
            </Stack>
            <Stack $dense>
              <SmallButton $dense><FxIcon />图元公式</SmallButton>
              <SmallButton $dense><BookIcon />五金手册</SmallButton>
              <SmallButton $dense><SumIcon />局部汇总</SmallButton>
            </Stack>
          </Group>
          <Divider />
          <Group $w={113}>
            <BigButton $w={58}><CloudPriceIcon /><BigLabel>智能组价</BigLabel></BigButton>
            <BigButton $w={46}><CloudCheckIcon /><BigLabel>云检查</BigLabel></BigButton>
          </Group>
          <Divider />
        </Ribbon>

        <Body>
          <ProjectRail>
            <RailHead><button aria-label="收起项目栏"><Chevrons /></button></RailHead>
            <RailItem $w={2} $color="#1f4e94">项目</RailItem>
            <RailItem $w={15} $color="#1f4e94">项目...</RailItem>
            <RailItem $w={13} $color="#0aa5dd">项目...</RailItem>
            <RailItem $w={23} $color="#000">项目…</RailItem>
            <RailItem $w={23} $color="#000">项目…</RailItem>
          </ProjectRail>
          <Workspace>
            <SectionTabs>
              {["造价分析", "工程概况", "取费设置", "分部分项", "措施项目", "其他项目", "人材机汇总", "费用汇总"].map((t) => (
                <SectionTab key={t} $active={t === "分部分项"}>{t}</SectionTab>
              ))}
            </SectionTabs>
            <Panels>
              <TreePanel>
                {TREE.map(([cells, label], i) => (
                  <TreeRow key={label}>
                    {cells.split("").map((c, j) => <Cell key={j} kind={c} />)}
                    <TreeLabel $active={i === 7}>{label}</TreeLabel>
                    {i === 0 && <TreeCollapse aria-label="收起"><Chevrons /></TreeCollapse>}
                  </TreeRow>
                ))}
              </TreePanel>
              <Content>
                <GridPane>
                  <Table>
                    <Cols widths={COLS} />
                    <thead>
                      <tr>
                        <CornerTh />
                        <Th $hot>编码</Th>
                        <Th>类别</Th>
                        <Th>名称</Th>
                        {HEADS.map((h) => <Th key={h}>{h}</Th>)}
                        <Th />
                      </tr>
                    </thead>
                    <tbody>
                      {ROWS.map((r) => (
                        <Tr key={r.code} $h={r.h ?? 22} $bg={r.no ? "#ade8fb" : undefined}>
                          <NumTd $hot={r.active}>{r.no}</NumTd>
                          {r.no ? (
                            <GroupCodeTd $open>
                              <GroupCode><ExpandBox aria-label="折叠" />{r.code}</GroupCode>
                            </GroupCodeTd>
                          ) : (
                            <CodeTd $last={r.last} $active={r.active}>
                              {r.active ? <CodeLine>{r.code}<MoreButton>…</MoreButton></CodeLine> : r.code}
                            </CodeTd>
                          )}
                          <CjkTd $align="center">{r.kind}</CjkTd>
                          <CjkTd><Mixed text={r.name} /></CjkTd>
                          {r.v.map((v, i) => <Td key={i} $align={ALIGN[i]}>{v}</Td>)}
                          <Td />
                        </Tr>
                      ))}
                      <Tr $h={90} $bg="#ade8fb">
                        <NumTd />
                        <GroupCodeTd />
                        <Td />
                        <CjkTd $top>水泥砂浆楼面（电井）</CjkTd>
                        {HEADS.map((h) => <Td key={h} />)}
                        <Td />
                      </Tr>
                    </tbody>
                  </Table>
                </GridPane>
                <GridScroll>
                  <ScrollArrow aria-label="向左滚动">
                    <svg width="4" height="8" viewBox="0 0 4 8"><path d="M4 0V8L0 4Z" fill="#555" /></svg>
                  </ScrollArrow>
                  <ScrollThumb />
                </GridScroll>
                <PaneHandle />
                <DetailTabs>
                  {["工料机显示", "单价构成", "标准换算", "换算信息", "特征及内容", "工程量明细", "反查图形工程量", "说明信息", "组价方案"].map((t) => (
                    <DetailTab key={t} $active={t === "工程量明细"}>{t}</DetailTab>
                  ))}
                </DetailTabs>
                <DetailPanes>
                  <FormulaPane>
                    <SizedTable $w={664}>
                      <Cols widths={[28, 117, 291, 90, 57, 81]} />
                      <thead>
                        <tr>
                          <Th />
                          <Th>内容说明</Th>
                          <Th>计算式</Th>
                          <Th>结果</Th>
                          <Th><WrapHead>累加标识</WrapHead></Th>
                          <Th>引用代码</Th>
                        </tr>
                      </thead>
                      <tbody>
                        {Array.from({ length: 11 }, (_, n) => (
                          <Tr key={n} $h={22} $bg={n === 0 ? "#ccffff" : undefined}>
                            <NumTd>{n}</NumTd>
                            <CjkTd>{n === 0 ? "计算结果" : ""}</CjkTd>
                            <Td>{n ? "0" : ""}</Td>
                            <Td $align="center" $bg={n ? "#ffffe6" : undefined}>0</Td>
                            <TickTd>{n > 0 && <Tick type="checkbox" defaultChecked aria-label={`累加标识 ${n}`} />}</TickTd>
                            <Td />
                          </Tr>
                        ))}
                      </tbody>
                    </SizedTable>
                  </FormulaPane>
                  <Splitter aria-label="展开">
                    <svg width="5" height="8" viewBox="0 0 5 8" fill="none"><path d="M0 0L4 4L0 8" stroke="#fff" /></svg>
                  </Splitter>
                  <VariablePane>
                    <SizedTable $w={419}>
                      <Cols widths={[22, 76, 113, 47, 101, 60]} />
                      <thead>
                        <tr>
                          <Th />
                          <Th $hot>变量名</Th>
                          <Th>变量说明</Th>
                          <Th>单位</Th>
                          <Th>计算公式</Th>
                          <Th>变量值</Th>
                        </tr>
                      </thead>
                      <tbody>
                        <Tr $h={19} $bg="#f0eee0">
                          <VarNumTd $hot>1</VarNumTd>
                          <VarTd $align="center" $active>JZMJ</VarTd>
                          <CjkTd>建筑面积</CjkTd>
                          <VarTd>m2</VarTd>
                          <VarTd>0</VarTd>
                          <VarTd $align="right">0</VarTd>
                        </Tr>
                      </tbody>
                    </SizedTable>
                  </VariablePane>
                </DetailPanes>
              </Content>
            </Panels>
          </Workspace>
        </Body>

        <Menu role="menu">
          <MenuItem role="menuitem" $hover>记取超高降效</MenuItem>
          <MenuItem role="menuitem">取消超高降效</MenuItem>
        </Menu>
        <RedFrame $x={467} $y={21} $w={286} $h={212} />
        <RedFrame $x={508} $y={110} $w={130} $h={38} />
        <Arrows width="1140" height="660" viewBox="0 0 1140 660" fill="#f31bf3">
          <path d="M691 194L708 201L705 204L961 501L959 502L698 210L695 212Z" />
          <path d="M921 449L939 455L937 460L1118 636L1117 638L931 466L928 470Z" />
        </Arrows>
        <Remark>超高降效是在这里记取，然后计入到措施费的。</Remark>
        <CornerBlock />
      </Page>
    </>
  );
}
